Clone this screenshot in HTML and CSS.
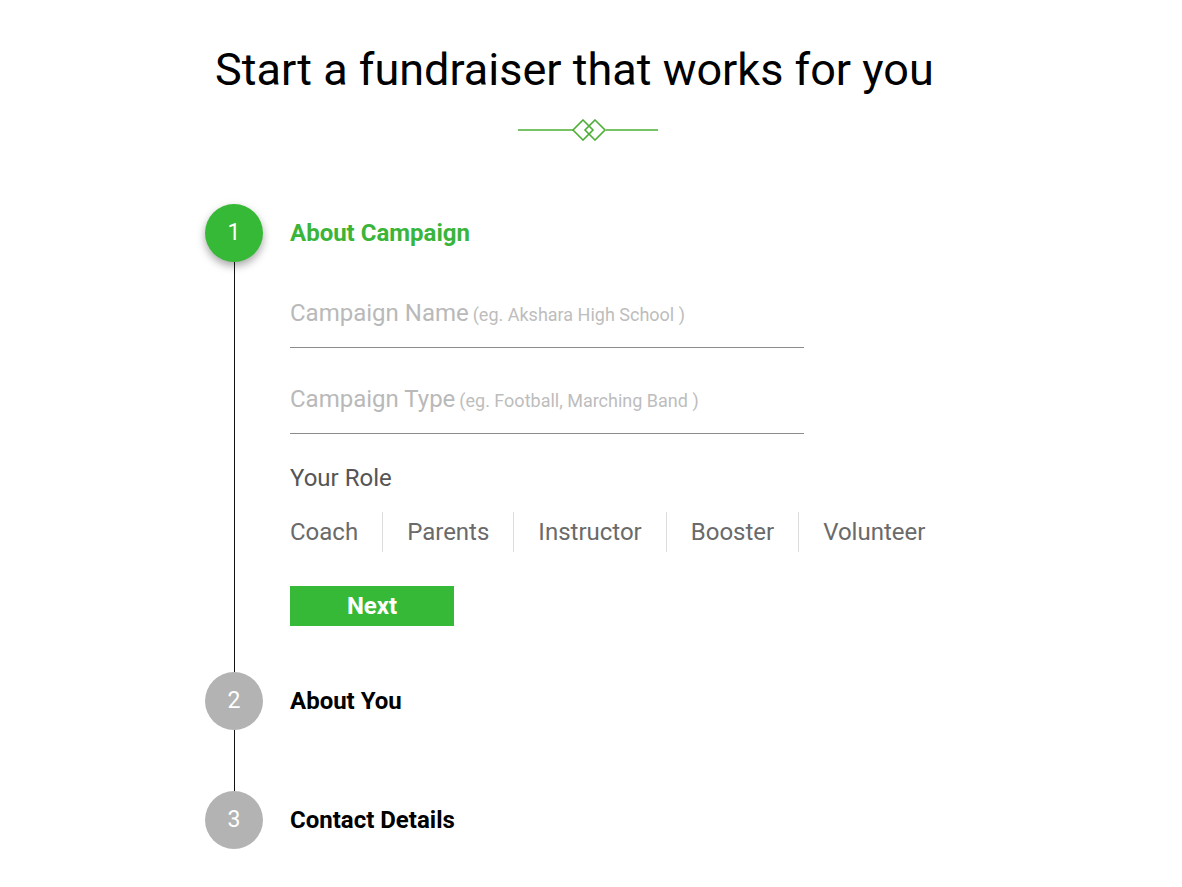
FILE: index.html
```html
<!DOCTYPE html>
<html lang="en">
<head>
<meta charset="utf-8">
<title>Start a fundraiser</title>
<link rel="stylesheet" href="styles.css">
</head>
<body>
<main class="page">
  <header class="hero">
    <h1 class="hero-title">Start a fundraiser that works for you</h1>
    <div class="divider">
      <svg width="140" height="22" viewBox="0 0 140 22" aria-hidden="true">
        <line x1="0" y1="11" x2="56" y2="11" stroke="#4caf35" stroke-width="1.5"/>
        <line x1="88" y1="11" x2="140" y2="11" stroke="#4caf35" stroke-width="1.5"/>
        <path d="M65 1 L75 11 L65 21 L55 11 Z" fill="none" stroke="#4caf35" stroke-width="1.6"/>
        <path d="M77 1 L87 11 L77 21 L67 11 Z" fill="none" stroke="#4caf35" stroke-width="1.6"/>
      </svg>
    </div>
  </header>

  <ol class="steps">
    <li class="step step-active">
      <div class="rail">
        <span class="bullet bullet-active">1</span>
        <span class="rail-line"></span>
      </div>
      <div class="step-body">
        <h2 class="step-title title-active">About Campaign</h2>
        <div class="field">
          <span class="ph-main">Campaign Name</span> <span class="ph-hint">(eg. Akshara High School )</span>
        </div>
        <div class="field">
          <span class="ph-main">Campaign Type</span> <span class="ph-hint">(eg. Football, Marching Band )</span>
        </div>
        <div class="role-label">Your Role</div>
        <div class="roles">
          <span class="role">Coach</span>
          <span class="role">Parents</span>
          <span class="role">Instructor</span>
          <span class="role">Booster</span>
          <span class="role">Volunteer</span>
        </div>
        <button class="next-btn" type="button">Next</button>
      </div>
    </li>
    <li class="step step-mid">
      <div class="rail">
        <span class="bullet">2</span>
        <span class="rail-line"></span>
      </div>
      <div class="step-body">
        <h2 class="step-title">About You</h2>
      </div>
    </li>
    <li class="step step-last">
      <div class="rail">
        <span class="bullet">3</span>
      </div>
      <div class="step-body">
        <h2 class="step-title">Contact Details</h2>
      </div>
    </li>
  </ol>
</main>
</body>
</html>
```

FILE: styles.css
```css
* { box-sizing: border-box; }

html, body {
  margin: 0;
  padding: 0;
  background: #ffffff;
  font-family: Roboto, "Liberation Sans", Arial, sans-serif;
}

.page {
  padding: 0 0 0 205px;
}

.hero {
  padding-top: 44px;
}

.hero-title {
  margin: 0 0 0 10px;
  font-size: 45px;
  font-weight: 400;
  line-height: 52px;
  color: #000;
  letter-spacing: 0;
}

.divider {
  margin: 23px 0 0 313px;
  height: 22px;
  line-height: 0;
}

.steps {
  list-style: none;
  margin: 0;
  padding: 0;
  margin-top: 63px;
}

.step {
  display: flex;
  gap: 27px;
}

.rail {
  width: 58px;
  display: flex;
  flex-direction: column;
  align-items: center;
  flex: none;
}

.bullet {
  width: 58px;
  height: 58px;
  border-radius: 50%;
  background: #b3b3b3;
  color: #fff;
  font-size: 23px;
  line-height: 58px;
  text-align: center;
  flex: none;
}

.bullet-active {
  background: #36b936;
  box-shadow: 0 4px 8px rgba(0, 0, 0, 0.35);
}

.rail-line {
  flex: 1;
  width: 1px;
  background: #111;
}

.step-body {
  flex: 1;
}

.step-active .step-body { padding-bottom: 46px; }
.step-mid .step-body { padding-bottom: 61px; }

.step-title {
  margin: 0;
  font-size: 24px;
  font-weight: 700;
  line-height: 58px;
  color: #000;
}

.title-active {
  color: #3ab53a;
}

.field {
  width: 514px;
  margin-top: 36px;
  padding-bottom: 16px;
  border-bottom: 1px solid #8c8c8c;
  line-height: 30px;
  white-space: nowrap;
}

.ph-main {
  font-size: 24px;
  color: #b9b9b9;
}

.ph-hint {
  font-size: 18px;
  color: #bdbdbd;
}

.role-label {
  margin-top: 29px;
  font-size: 24px;
  line-height: 30px;
  color: #555;
}

.roles {
  display: flex;
  margin-top: 19px;
}

.role {
  font-size: 24px;
  line-height: 40px;
  color: #6a6a6a;
  padding: 0 24px;
  border-left: 1px solid #dcdcdc;
}

.role:first-child {
  padding-left: 0;
  border-left: none;
}

.next-btn {
  display: block;
  margin-top: 34px;
  width: 164px;
  height: 40px;
  border: none;
  background: #36b936;
  color: #fff;
  font-family: Roboto, "Liberation Sans", Arial, sans-serif;
  font-size: 24px;
  font-weight: 700;
  padding: 0;
  cursor: pointer;
}
```
